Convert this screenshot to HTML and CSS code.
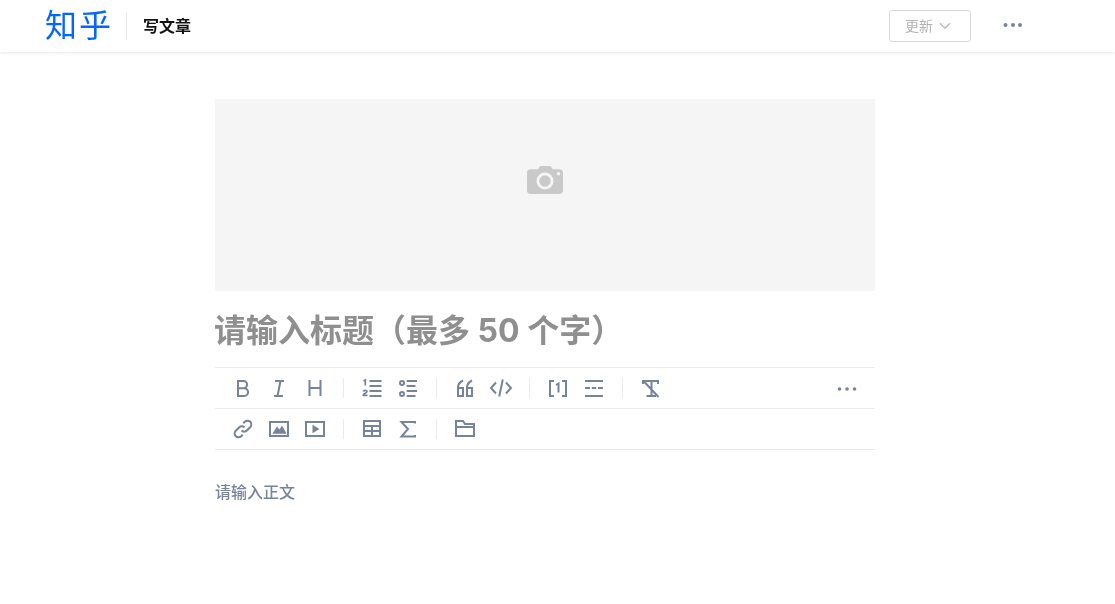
FILE: index.html
```html
<!DOCTYPE html>
<html lang="zh-CN">

<head>
    <meta charset="UTF-8">
    <title>写文章</title>
    <link rel="stylesheet" href="styles.css">
</head>

<body>
    <header class="header">
        <a class="logo"><span class="soft-text">知乎</span></a>
        <span class="header-title soft-text">写文章</span>
        <button class="update-btn">
            <span class="update-label soft-text">更新</span>
            <svg class="chevron" viewBox="0 0 12 8"><path d="M1 1.200l5 5 5-5" /></svg>
        </button>
        <svg class="header-more" viewBox="0 0 20 4"><circle cx="2.500" cy="2" r="2" /><circle cx="10" cy="2" r="2" /><circle cx="17" cy="2" r="2" /></svg>
    </header>

    <main class="editor">
        <div class="cover">
            <svg class="camera" viewBox="0 0 36 28">
                <path fill-rule="evenodd" d="M11 3.200l1.400-2.200c.4-.6 1-1 1.700-1h8.500c.7 0 1.300.4 1.700 1l1.400 2.200h7c1.800 0 3.300 1.400 3.300 3.200v18.400c0 1.800-1.500 3.200-3.300 3.200H3.300C1.500 28 0 26.600 0 24.800V6.400C0 4.600 1.500 3.200 3.300 3.200H11zM18 23.500a8.500 8.500 0 1 0 0-17 8.500 8.500 0 0 0 0 17zm0-2.800a5.700 5.700 0 1 1 0-11.400 5.700 5.700 0 0 1 0 11.400zM31.500 9.500a1.800 1.800 0 1 0 0-3.600 1.800 1.800 0 0 0 0 3.600z" />
            </svg>
        </div>
        <h1 class="title soft-text">请输入标题（最多 50 个字）</h1>

        <div class="toolbar">
            <div class="tool-row">
                <span class="tool"><svg viewBox="0 0 24 24"><path d="M7 5h5.500a3.600 3.600 0 0 1 0 7.200H7zM7 12.200h6.200a3.900 3.900 0 0 1 0 7.800H7z" /></svg></span>
                <span class="tool"><svg viewBox="0 0 24 24"><path d="M8 5h9M7 20h9M13.500 5l-3 15" /></svg></span>
                <span class="tool"><svg viewBox="0 0 24 24"><path d="M6.500 4v16M17.500 4v16M6.500 12h11" /></svg></span>
                <span class="sep"></span>
                <span class="tool"><svg viewBox="0 0 24 24"><path d="M9.500 5h12M9.500 10h12M9.500 15h12M9.500 20h12" /><path class="thin" d="M3.500 5l1.800-1v5.500M3.300 15.500c.3-1.500 3.700-1.500 3.700 0 0 1.500-3.700 2.200-3.700 3.800h4.200" /></svg></span>
                <span class="tool"><svg viewBox="0 0 24 24"><circle cx="6" cy="7" r="2" /><circle cx="6" cy="18" r="2" /><path d="M10.700 5H21M10.700 10h8.800M10.700 15H21M10.700 20h8.800" /></svg></span>
                <span class="sep"></span>
                <span class="tool"><svg viewBox="0 0 24 24"><path d="M10 4.500c-3 1.500-5 3.500-5 7M5 12h5v8H5zM19 4.500c-3 1.500-5 3.500-5 7M14 12h5v8h-5z" /></svg></span>
                <span class="tool"><svg viewBox="0 0 24 24"><path d="M7 6.500L2 12l5 5.500M17 6.500l5 5.500-5 5.500M13.800 3.500l-3.600 17" /></svg></span>
                <span class="sep"></span>
                <span class="tool"><svg viewBox="0 0 24 24"><path d="M8 5H4v15h4M16 5h4v15h-4" /><path d="M10 9l2.500-1.500v9" /></svg></span>
                <span class="tool"><svg viewBox="0 0 24 24"><path d="M3 5h18M3 20h18M3 12h5M9.800 12h4.400M16 12h5" /></svg></span>
                <span class="sep"></span>
                <span class="tool"><svg viewBox="0 0 24 24"><path d="M4 8V5h15v3M12.500 5v15M7.500 20h9.500M4.500 5l15 16" /></svg></span>
                <span class="tool tool-more"><svg viewBox="0 0 24 24"><circle class="dot" cx="4.500" cy="13" r="1.800" /><circle class="dot" cx="12" cy="13" r="1.800" /><circle class="dot" cx="19.500" cy="13" r="1.800" /></svg></span>
            </div>
            <div class="tool-row">
                <span class="tool"><svg viewBox="0 0 24 24"><path d="M10.500 13.500a3.800 3.800 0 0 0 5.400 0l3.300-3.300a3.800 3.800 0 0 0-5.400-5.400l-1.500 1.500M13.500 10.500a3.800 3.800 0 0 0-5.400 0l-3.300 3.300a3.800 3.800 0 0 0 5.400 5.400l1.500-1.500" /></svg></span>
                <span class="tool"><svg viewBox="0 0 24 24"><rect x="3" y="5" width="18" height="14" /><path class="solid" d="M5.300 16.800l4.700-7.300 2.500 3 2.500-4 4.700 8.300z" /></svg></span>
                <span class="tool"><svg viewBox="0 0 24 24"><rect x="3" y="5" width="18" height="14" /><path class="solid" d="M9.500 7.800l7 4.200-7 4.200z" /></svg></span>
                <span class="sep"></span>
                <span class="tool"><svg viewBox="0 0 24 24"><rect x="4" y="4" width="16" height="15" /><path d="M4 9h16M4 14h16M12 9v10" /></svg></span>
                <span class="tool"><svg viewBox="0 0 24 24"><path d="M19 6.500V5H5.500l6.500 7-6.500 7.500H19V18" /></svg></span>
                <span class="sep"></span>
                <span class="tool"><svg viewBox="0 0 24 24"><path d="M3 10h18v9H3zM3 10V4h7l2 3h9v3" /></svg></span>
            </div>
        </div>

        <p class="placeholder"><span class="soft-text">请输入正文</span></p>
    </main>
</body>

</html>
```

FILE: styles.css
```css
* {
    margin: 0;
    padding: 0;
    box-sizing: border-box;
    font-family: Inter, "Noto Sans CJK SC", sans-serif;
}

body {
    background: #fff;
    overflow: hidden;
}

/* own layer, so the text gets grey antialiasing */
.soft-text {
    display: inline-block;
    will-change: transform;
}

.header {
    display: flex;
    align-items: center;
    height: 52px;
    padding-left: 45px;
    background: #fff;
    box-shadow: 0 1px 3px rgba(18, 18, 18, 0.1);
}

.logo {
    width: 82px;
    height: 28px;
    border-right: 1px solid #ebebeb;
    color: #0566ff;
    font-size: 32px;
    font-weight: 400;
    line-height: 28px;
    letter-spacing: 2px;
    white-space: nowrap;
}

.header-title {
    margin: 0 0 2px 16px;
    color: #121212;
    font-size: 16px;
    font-weight: 600;
}

.update-btn {
    display: flex;
    align-items: center;
    justify-content: center;
    gap: 6px;
    width: 82px;
    height: 32px;
    margin-left: auto;
    padding-right: 4px;
    border: 1px solid #d9d9d9;
    border-radius: 3px;
    background: #fff;
    color: #b3b3b3;
    font-size: 14px;
}

.update-label {
    margin-bottom: 2px;
}

.chevron {
    width: 12px;
    height: 8px;
    fill: none;
    stroke: #bdbdbd;
    stroke-width: 1.600;
}

.header-more {
    width: 20px;
    height: 4px;
    margin: 0 92px 2px 32px;
    fill: #76839b;
}

.editor {
    width: 660px;
    margin: 47px 0 0 215px;
}

.cover {
    display: flex;
    justify-content: center;
    height: 192px;
    padding-top: 67px;
    background: #f5f5f5;
}

.camera {
    width: 36px;
    height: 28px;
    fill: #c9c9c9;
}

.title {
    display: block;
    height: 76px;
    margin-left: -1px;
    color: #8f8f8f;
    font-size: 32px;
    font-weight: 700;
    line-height: 79px;
}

.toolbar {
    border-top: 1px solid #ebebeb;
}

.tool-row {
    display: flex;
    align-items: center;
    height: 41px;
    padding-left: 10px;
    border-bottom: 1px solid #ebebeb;
}

.tool {
    display: flex;
    justify-content: center;
    width: 36px;
}

.tool svg {
    width: 24px;
    height: 24px;
    fill: none;
    stroke: #76839b;
    stroke-width: 2;
}

.tool .thin {
    stroke-width: 1.700;
}

.tool .solid,
.tool .dot {
    fill: #76839b;
    stroke: none;
}

.tool-more {
    margin-left: auto;
    margin-right: 10px;
}

.sep {
    width: 1px;
    height: 20px;
    margin: 0 10px;
    background: #ebebeb;
}

.placeholder {
    margin-top: 29px;
    color: #76839b;
    font-size: 16px;
    font-weight: 500;
    line-height: 26px;
}
```
